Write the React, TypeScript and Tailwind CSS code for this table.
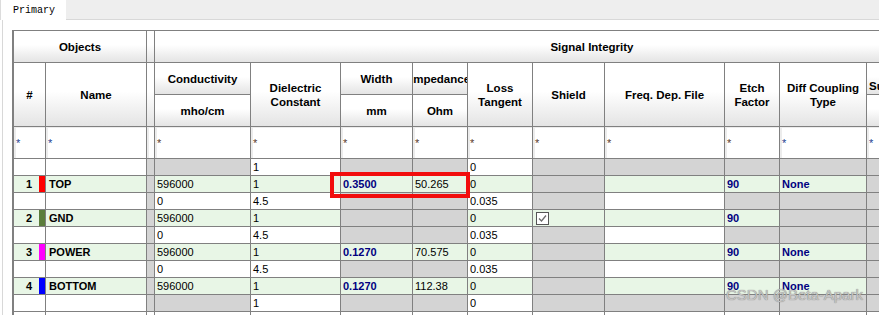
import { Fragment, type ReactNode } from 'react';

type Bg = 'g' | 'w' | 'x';
type Cell = { bg: Bg; t?: string; bold?: boolean; check?: boolean };

const bgClass: Record<Bg, string> = {
  g: 'bg-[#e8f6e6]',
  w: 'bg-white',
  x: 'bg-[#d4d4d4]',
};

const layers = [
  { n: '1', name: 'TOP', swatch: 'bg-[#ff0000]', width: '0.3500', imp: '50.265', diff: 'None', shield: false },
  { n: '2', name: 'GND', swatch: 'bg-[#5b7d3b]', width: '', imp: '', diff: '', shield: true },
  { n: '3', name: 'POWER', swatch: 'bg-[#ff00ff]', width: '0.1270', imp: '70.575', diff: 'None', shield: false },
  { n: '4', name: 'BOTTOM', swatch: 'bg-[#0000ff]', width: '0.1270', imp: '112.38', diff: 'None', shield: false },
];

// columns after the separator: cond, diel, width, imp, loss, shield, freq, etch, diff, last
const surface: Cell[] = [
  { bg: 'x' }, { bg: 'w', t: '1' }, { bg: 'x' }, { bg: 'x' }, { bg: 'w', t: '0' },
  { bg: 'x' }, { bg: 'x' }, { bg: 'x' }, { bg: 'x' }, { bg: 'x' },
];
const core: Cell[] = [
  { bg: 'w', t: '0' }, { bg: 'w', t: '4.5' }, { bg: 'x' }, { bg: 'x' }, { bg: 'w', t: '0.035' },
  { bg: 'x' }, { bg: 'w' }, { bg: 'x' }, { bg: 'x' }, { bg: 'x' },
];

function conductor(l: (typeof layers)[number]): Cell[] {
  return [
    { bg: 'g', t: '596000' },
    { bg: 'g', t: '1' },
    l.width ? { bg: 'g', t: l.width, bold: true } : { bg: 'x' },
    l.imp ? { bg: 'g', t: l.imp } : { bg: 'x' },
    { bg: 'g', t: '0' },
    l.shield ? { bg: 'g', check: true } : { bg: 'x' },
    { bg: 'g' },
    { bg: 'g', t: '90', bold: true },
    l.diff ? { bg: 'g', t: l.diff, bold: true } : { bg: 'x' },
    { bg: 'x' },
  ];
}

function Head({ children, className = '' }: { children?: ReactNode; className?: string }) {
  return (
    <div
      className={`flex items-center justify-center overflow-hidden whitespace-nowrap text-center bg-linear-to-b from-white from-45% to-[#e4e4e4] font-bold text-[11.5px] leading-[14px] text-black ${className}`}
    >
      {children}
    </div>
  );
}

function Filter({ star = true, blue = false }: { star?: boolean; blue?: boolean }) {
  return (
    <div className="flex items-center bg-white pl-[2px] shadow-[inset_2px_1px_0_#ececec]">
      {star && (
        <span className={`translate-y-[1px] text-[11px] leading-none ${blue ? 'text-[#23408f]' : 'text-[#5a3a2a]'}`}>*</span>
      )}
    </div>
  );
}

function Data({ c }: { c: Cell }) {
  return (
    <div
      className={`flex items-center overflow-hidden whitespace-nowrap pl-[2px] text-[11px] leading-[16px] ${bgClass[c.bg]} ${
        c.bold ? 'font-bold text-[#000080]' : 'text-black'
      }`}
    >
      {c.check ? (
        <span className="ml-[1px] flex h-[13px] w-[13px] items-center justify-center border border-[#555] bg-white">
          <svg width="11" height="11" viewBox="0 0 11 11">
            <polyline points="2,5.5 4.5,8 9,2.5" fill="none" stroke="#6b6b6b" strokeWidth="1.3" />
          </svg>
        </span>
      ) : (
        c.t
      )}
    </div>
  );
}

export default function App() {
  const rows: { layer?: (typeof layers)[number]; cells: Cell[] }[] = [
    { cells: surface },
    { layer: layers[0], cells: conductor(layers[0]) },
    { cells: core },
    { layer: layers[1], cells: conductor(layers[1]) },
    { cells: core },
    { layer: layers[2], cells: conductor(layers[2]) },
    { cells: core },
    { layer: layers[3], cells: conductor(layers[3]) },
    { cells: surface },
    { cells: Array.from({ length: 10 }, () => ({ bg: 'w' as Bg })) },
  ];

  return (
    <div className="relative flex h-[315px] w-[879px] flex-col overflow-hidden bg-white font-['Liberation_Sans',Arial,sans-serif]">
      {/* tab strip */}
      <div className="flex h-[20px] shrink-0 bg-[#eeeeee]">
        <div className="flex w-[66px] items-center border-l border-[#dcdcdc] bg-white pl-[12px] font-['Liberation_Mono',monospace] text-[10px] text-black">
          Primary
        </div>
        <div className="flex-1 border-b border-[#d8d8d8]" />
      </div>

      <div className="ml-[2px] flex-1 border-l border-[#d8d8d8] pl-[9px] pt-[10px]">
        <div className="grid w-max auto-rows-[16px] grid-cols-[31px_100px_7px_95px_89px_71px_54px_64px_71px_119px_54px_86px_162px] grid-rows-[31px_31px_31px_31px] gap-px border-l-2 border-t border-[#808080] bg-[#808080]">
          {/* header row 1 */}
          <Head className="col-span-2">Objects</Head>
          <Head />
          <Head className="col-span-10">Signal Integrity</Head>

          {/* header row 2 */}
          <Head className="row-span-2">#</Head>
          <Head className="row-span-2">Name</Head>
          <Head className="row-span-2" />
          <Head>Conductivity</Head>
          <Head className="row-span-2">
            Dielectric
            <br />
            Constant
          </Head>
          <Head>Width</Head>
          <Head>Impedance</Head>
          <Head className="row-span-2">
            Loss
            <br />
            Tangent
          </Head>
          <Head className="row-span-2">Shield</Head>
          <Head className="row-span-2">Freq. Dep. File</Head>
          <Head className="row-span-2">
            Etch
            <br />
            Factor
          </Head>
          <Head className="row-span-2">
            Diff Coupling
            <br />
            Type
          </Head>
          <Head className="!items-end !justify-start pb-[1px] pl-[2px]">Surface Roughness</Head>

          {/* header row 3 */}
          <Head>mho/cm</Head>
          <Head>mm</Head>
          <Head>Ohm</Head>
          <Head />

          {/* filter row */}
          <Filter blue />
          <Filter blue />
          <Filter star={false} />
          {Array.from({ length: 10 }, (_, i) => (
            <Filter key={i} blue={i === 8 || i === 9} />
          ))}

          {/* data rows */}
          {rows.map((r, ri) => (
            <Fragment key={ri}>
              {r.layer ? (
                <>
                  <div className="flex items-stretch justify-end bg-[#e8f6e6]">
                    <span className="mr-[7px] self-center text-[11px] font-bold leading-[16px] text-black">{r.layer.n}</span>
                    <span className={`w-[6px] ${r.layer.swatch}`} />
                  </div>
                  <div className="flex items-center bg-[#e8f6e6] pl-[3px] text-[11px] font-bold leading-[16px] text-black">
                    {r.layer.name}
                  </div>
                </>
              ) : (
                <>
                  <div className="bg-white" />
                  <div className="bg-white" />
                </>
              )}
              <div className={ri === 9 ? 'bg-white' : 'bg-[#d4d4d4]'} />
              {r.cells.map((c, ci) => (
                <Data key={ci} c={c} />
              ))}
            </Fragment>
          ))}
        </div>
      </div>

      {/* highlight box */}
      <div className="pointer-events-none absolute left-[330px] top-[172px] h-[26px] w-[140px] border-[4px] border-[#f20d0d]" />

      {/* watermark */}
      <div className="pointer-events-none absolute left-[726px] top-[285px] text-[15px] leading-[20px] text-[#c4c4c4] [text-shadow:0_0_1px_#6a6a6a]">
        CSDN @Beta-Apark
      </div>
    </div>
  );
}
